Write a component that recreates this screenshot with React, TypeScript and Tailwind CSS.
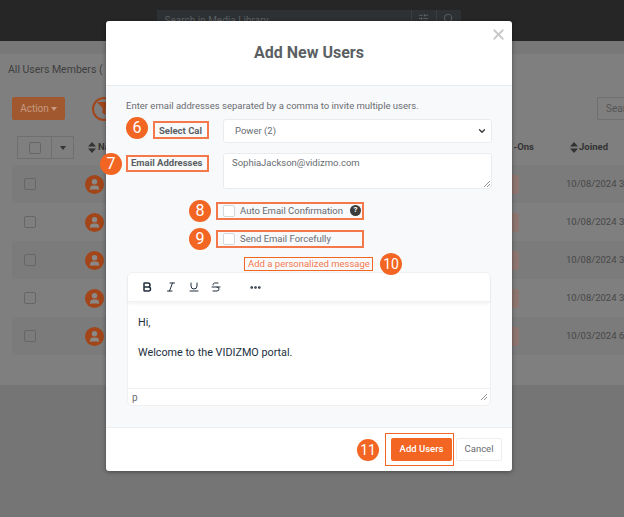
import { ChevronDown, Search, SlidersHorizontal, X, Bold, Italic, Underline, Strikethrough, MoreHorizontal, User } from "lucide-react";

const font = { fontFamily: "Roboto, 'Liberation Sans', sans-serif" };

function Sort() {
  return (
    <svg width="8" height="11" viewBox="0 0 8 11" className="shrink-0">
      <path d="M4 0 L8 4.5 H0 Z M0 6.5 H8 L4 11 Z" fill="#333" />
    </svg>
  );
}

function Badge({ n, className }: { n: string; className: string }) {
  return (
    <div className={"absolute w-[22px] h-[22px] rounded-full bg-[#f26522] text-white flex items-center justify-center " + className}>
      {n}
    </div>
  );
}

function Row({ date, shade }: { date: string; shade: boolean }) {
  return (
    <div className={"h-[38px] ml-3 flex items-center " + (shade ? "bg-[#7b7b7b]" : "")}>
      <div className="w-[12px] h-[12px] ml-[12px] border border-[#666] rounded-[2px]" />
      <div className="ml-[49px] w-[19px] h-[19px] rounded-full bg-[#a2461a] flex items-center justify-center">
        <User size={13} fill="#8a8a8a" stroke="#8a8a8a" />
      </div>
      <div className="ml-auto flex items-center">
        <div className="w-[7px] h-[19px] bg-[#8f7570] rounded-r-[3px] mr-[47px]" />
        <span className="text-[9.5px] text-[#474747] w-[58px] whitespace-nowrap">{date}</span>
      </div>
    </div>
  );
}

export default function App() {
  return (
    <div className="relative w-[624px] h-[517px] overflow-hidden bg-[#7f7f7f]" style={font}>
      {/* page behind the dialog */}
      <div className="h-[41px] bg-[#262626] flex justify-center">
        <div className="mt-[10px] w-[304px] h-[31px] ml-[-7px] bg-[#2d3134] flex items-start text-[10px] text-[#5d6165]">
          <span className="ml-2 mt-[3px] flex-1">Search in Media Library</span>
          <div className="w-[25px] h-[20px] border-l border-[#3a3e41] flex justify-center pt-[3px]">
            <SlidersHorizontal size={11} />
          </div>
          <div className="w-[25px] h-[20px] border-l border-[#3a3e41] flex justify-center pt-[3px]">
            <Search size={11} />
          </div>
        </div>
      </div>
      <div className="h-[13px] bg-[#787878]" />
      <div className="flex flex-col">
        <div className="pl-2 pt-[9px] text-[10.5px] leading-[14px] text-[#404040] h-[43px]">All Users Members (</div>
        <div className="flex items-center pl-3 h-[23px]">
          <div className="w-[53px] h-[23px] bg-[#a2582f] rounded-[2px] text-[#c69a80] text-[10px] flex items-center justify-center gap-[2px]">
            Action
            <svg width="6" height="4" viewBox="0 0 6 4"><path d="M0 0H6L3 4Z" fill="#c69a80" /></svg>
          </div>
          <div className="ml-[27px] w-[24px] h-[24px] rounded-full border-2 border-[#a2461a] flex items-center justify-center">
            <svg width="14" height="13" viewBox="0 0 14 13"><path d="M0 0H14L8.5 6V13L5.5 11V6Z" fill="#a2461a" /></svg>
          </div>
          <div className="ml-auto w-[27px] h-[23px] border border-[#6f6f6f] rounded-l-[2px] border-r-0 pl-2 flex items-center text-[10px] text-[#555] whitespace-nowrap">Sear</div>
        </div>
        <div className="h-[23px] mt-[16px] mb-[6px] flex items-center">
          <div className="ml-[17px] w-[57px] h-[23px] border border-[#6f6f6f] flex items-center">
            <div className="w-[34px] h-full border-r border-[#6f6f6f] flex items-center justify-center">
              <div className="w-[12px] h-[12px] border border-[#666] rounded-[2px]" />
            </div>
            <svg className="ml-[8px]" width="6" height="4" viewBox="0 0 6 4"><path d="M0 0H6L3 4Z" fill="#333" /></svg>
          </div>
          <div className="ml-[14px] flex items-center gap-[2px] text-[9.5px] font-bold text-[#333]"><Sort />Na</div>
          <div className="ml-auto flex items-center text-[9.5px] font-bold text-[#333]">
            <span className="mr-[36px]">-Ons</span>
            <span className="flex items-center gap-[1px] w-[54px]"><Sort />Joined</span>
          </div>
        </div>
        <Row date="10/08/2024 3" shade />
        <Row date="10/08/2024 3" shade={false} />
        <Row date="10/08/2024 3" shade />
        <Row date="10/08/2024 3" shade={false} />
        <Row date="10/03/2024 6" shade />
        <div className="h-[30px]" />
        <div className="h-[132px] bg-[#757575]" />
      </div>

      {/* modal */}
      <div className="absolute left-[106px] top-[21px] w-[406px] h-[450px] rounded-[3px] overflow-hidden bg-white shadow-[0_1px_4px_rgba(0,0,0,0.4)] flex flex-col">
        <div className="h-[65px] shrink-0 relative flex items-center justify-center border-b border-[#e9ecef]">
          <span className="text-[16px] font-bold text-[#5b5f63] -mt-[1px]">Add New Users</span>
          <X size={17} strokeWidth={2.5} className="absolute right-[5px] top-[5px] text-[#c8c8c8]" />
        </div>
        <div className="flex-1 bg-[#f8f9fb] pt-[13px] px-5 flex flex-col">
          <div className="text-[9.5px] leading-[14px] text-[#686c71]">Enter email addresses separated by a comma to invite multiple users.</div>
          <div className="mt-[6px] flex items-center h-[24px]">
            <label className="w-[97px] pl-[33px] text-[9.5px] font-bold text-[#5b5f63] whitespace-nowrap">Select Cal</label>
            <div className="flex-1 h-[24px] bg-white border border-[#e9ecef] rounded-[3px] flex items-center pl-[11px] pr-[4px] text-[9.5px] text-[#686c71]">
              <span className="flex-1">Power (2)</span>
              <ChevronDown size={10} strokeWidth={3} className="text-[#333]" />
            </div>
          </div>
          <div className="mt-[10px] flex items-start">
            <label className="w-[97px] pl-[5px] pt-[3px] text-[9.5px] leading-[14px] font-bold text-[#5b5f63] whitespace-nowrap">Email Addresses</label>
            <div className="relative flex-1 h-[36px] bg-white border border-[#e9ecef] rounded-[3px] pl-[8px] pt-[1px] text-[9.5px] leading-[16px] text-[#686c71]">
              SophiaJackson@vidizmo.com
              <svg className="absolute right-[1px] bottom-[1px]" width="6" height="6" viewBox="0 0 6 6"><path d="M0 6L6 0M3 6L6 3" stroke="#777" strokeWidth="0.8" /></svg>
            </div>
          </div>
          <div className="mt-[13px] ml-[90px] flex items-center h-[18px]">
            <div className="w-[12px] h-[12px] ml-[7px] bg-white border border-[#d5d8db] rounded-[2px]" />
            <span className="ml-[5px] text-[9.5px] text-[#686c71]">Auto Email Confirmation</span>
            <div className="ml-[7px] -mt-[2px] w-[11px] h-[11px] rounded-full bg-[#3b3b3b] text-white text-[8px] font-bold flex items-center justify-center">?</div>
          </div>
          <div className="mt-[10px] ml-[90px] flex items-center h-[18px]">
            <div className="w-[12px] h-[12px] ml-[7px] bg-white border border-[#d5d8db] rounded-[2px]" />
            <span className="ml-[5px] text-[9.5px] text-[#686c71]">Send Email Forcefully</span>
          </div>
          <div className="mt-[9px] ml-[122px] text-[9.5px] leading-[13px] text-[#f47a4e] whitespace-nowrap">Add a personalized message</div>
          <div className="mt-[2px] ml-[1px] h-[134px] w-[364px] bg-white rounded-[6px] border border-[#eef0f2] flex flex-col">
            <div className="h-[29px] flex items-center shrink-0 border-b border-[#f0f1f3] shadow-[0_2px_3px_rgba(0,0,0,0.05)] text-[#222f3e]">
              <Bold size={12} strokeWidth={3} className="ml-[13px]" />
              <Italic size={12} className="ml-[12px]" />
              <Underline size={12} className="ml-[11px]" />
              <Strikethrough size={12} className="ml-[10px]" />
              <MoreHorizontal size={13} strokeWidth={3} className="ml-[27px]" />
            </div>
            <div className="flex-1 pl-[10px] pt-[13px] text-[10.8px] leading-[15px] text-[#222f3e]">
              <div>Hi,</div>
              <div className="mt-[15px]">Welcome to the VIDIZMO portal.</div>
            </div>
            <div className="h-[17px] shrink-0 border-t border-[#eef0f2] pl-[4px] flex items-center justify-between pr-[3px] text-[10px] text-[#686c71]">
              <span>p</span>
              <svg width="6" height="6" viewBox="0 0 6 6"><path d="M0 6L6 0M3 6L6 3" stroke="#777" strokeWidth="0.8" /></svg>
            </div>
          </div>
        </div>
        <div className="h-[44px] shrink-0 border-t border-[#eceef0] flex items-center justify-end pr-[10px] gap-[4px]">
          <div className="w-[61px] h-[23px] bg-[#f26522] rounded-[2px] text-white text-[9.5px] font-medium flex items-center justify-center">Add Users</div>
          <div className="w-[46px] h-[23px] bg-white border border-[#eceef0] rounded-[2px] text-[#686c71] text-[9.5px] flex items-center justify-center">Cancel</div>
        </div>
      </div>

      {/* annotation call-outs */}
      <div className="absolute left-[153px] top-[121px] w-[56px] h-[18px] border-2 border-[#f4784a]" />
      <div className="absolute left-[126px] top-[155px] w-[83px] h-[17px] border-2 border-[#f4784a]" />
      <div className="absolute left-[216px] top-[202px] w-[148px] h-[18px] border-2 border-[#f4784a]" />
      <div className="absolute left-[216px] top-[230px] w-[148px] h-[18px] border-2 border-[#f4784a]" />
      <div className="absolute left-[244px] top-[257px] w-[129px] h-[14px] border border-[#f26522]" />
      <div className="absolute left-[385px] top-[433px] w-[69px] h-[33px] border border-[#f26522]" />
      <Badge n="6" className="left-[126px] top-[117px] text-[16px]" />
      <Badge n="7" className="left-[100px] top-[153px] text-[16px]" />
      <Badge n="8" className="left-[189px] top-[200px] text-[16px]" />
      <Badge n="9" className="left-[189px] top-[228px] text-[16px]" />
      <Badge n="10" className="left-[380px] top-[253px] text-[14px]" />
      <Badge n="11" className="left-[357px] top-[439px] text-[14px]" />
    </div>
  );
}
